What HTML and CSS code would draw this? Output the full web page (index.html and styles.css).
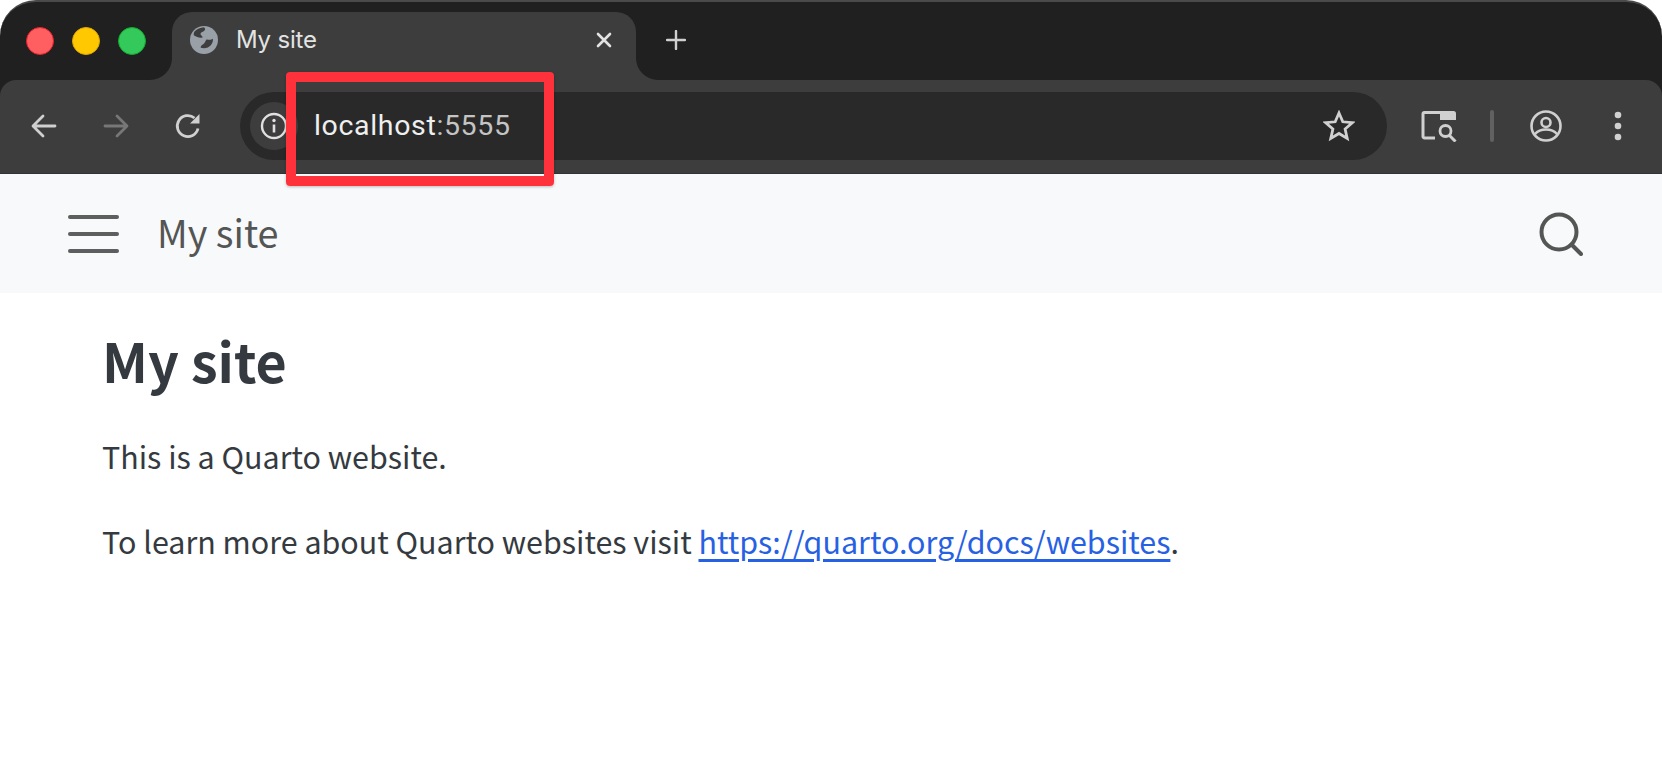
FILE: index.html
```html
<!DOCTYPE html>
<html lang="en">
<head>
<meta charset="utf-8">
<title>My site</title>
<link rel="stylesheet" href="styles.css">
</head>
<body>
<div class="browser">
  <div class="chrome">
  <div class="tabstrip">
    <div class="lights">
      <span class="light red"></span>
      <span class="light yellow"></span>
      <span class="light green"></span>
    </div>
    <div class="tab">
      <svg class="globe" viewBox="0 0 28 28"><circle cx="14" cy="14" r="14" fill="#9aa0a8"/><path d="M4.500 5.500C7 3 10.500 1.500 14 1.300c1.500 1.200 1.500 2.700 0 3.700-1.500 1-3.500 1.500-3.500 3 0 1.500 2.500 2 2 3.500C10 12.500 6.500 11 4 9.500c-.5-1.300-.2-2.800.5-4z" fill="#3d3d3d"/><path d="M16.500 13.500c1.500-.5 2.500 1.500 6.300-.8.8 3-1.800 7.300-5 8.800-2.300 1-5.300 .8-7.100.2-.2-1.700 1.300-2.700 2.800-3.700 1.500-1 2-3.500 3-4.500z" fill="#3d3d3d"/></svg>
      <span class="tab-title">My site</span>
      <svg class="tab-close" viewBox="0 0 16 16"><path d="M2 2l12 12M14 2L2 14" stroke="#e3e3e3" stroke-width="2.600" stroke-linecap="round"/></svg>
    </div>
    <svg class="newtab" viewBox="0 0 20 20"><path d="M10 1v18M1 10h18" stroke="#d0d0d0" stroke-width="2.400" stroke-linecap="round"/></svg>
  </div>
  <div class="toolbar">
    <svg class="nav-icon" viewBox="0 0 28 28"><path d="M25 14H3.500M13 4L3 14l10 10" fill="none" stroke="#d0d0d0" stroke-width="2.800" stroke-linecap="round" stroke-linejoin="round"/></svg>
    <svg class="nav-icon" viewBox="0 0 28 28"><path d="M3 14h21.500M15 4l10 10-10 10" fill="none" stroke="#777" stroke-width="2.800" stroke-linecap="round" stroke-linejoin="round"/></svg>
    <svg class="nav-icon" viewBox="0 0 28 28"><path d="M24 16.500A10.500 10.500 0 1 1 20.500 6" fill="none" stroke="#d0d0d0" stroke-width="2.800"/><path d="M25.500 2v9.500H16z" fill="#d0d0d0"/></svg>
    <div class="omnibox">
      <div class="info-chip">
        <svg class="info" viewBox="0 0 28 28"><circle cx="14" cy="14" r="12" fill="none" stroke="#e0e0e0" stroke-width="2.400"/><path d="M14 12.500v8" stroke="#e0e0e0" stroke-width="2.600"/><circle cx="14" cy="8.500" r="1.700" fill="#e0e0e0"/></svg>
      </div>
      <span class="url">localhost<span class="url-port">:5555</span></span>
      <svg class="star" viewBox="0 0 32 32"><path d="M16 3l3.800 8.800 9.500.9-7.200 6.300 2.100 9.400L16 23.500l-8.200 4.900L9.900 19l-7.200-6.300 9.500-.9z" fill="none" stroke="#d0d0d0" stroke-width="2.800" stroke-linejoin="miter"/></svg>
    </div>
    <div class="tools">
      <svg class="lens" viewBox="0 0 36 32"><path d="M14 28H3.500A1.500 1.500 0 0 1 2 26.500V4a1.500 1.500 0 0 1 1.500-1.500H19" fill="none" stroke="#d0d0d0" stroke-width="3"/><path d="M19 1h13.500A2.500 2.500 0 0 1 35 3.500V10H19z" fill="#d0d0d0"/><circle cx="24.500" cy="21" r="5.500" fill="none" stroke="#d0d0d0" stroke-width="2.800"/><path d="M28.500 25.500l6 6" stroke="#d0d0d0" stroke-width="3"/></svg>
      <span class="divider"></span>
      <svg class="profile" viewBox="0 0 32 32"><circle cx="16" cy="16" r="14.500" fill="none" stroke="#d0d0d0" stroke-width="2.600"/><circle cx="16" cy="12.500" r="4.500" fill="none" stroke="#d0d0d0" stroke-width="2.600"/><path d="M5 24c3-3.500 7-4.500 11-4.500s8 1 11 4.500" fill="none" stroke="#d0d0d0" stroke-width="2.600"/></svg>
      <svg class="dots" viewBox="0 0 8 30"><circle cx="4" cy="4" r="3.300" fill="#d0d0d0"/><circle cx="4" cy="15" r="3.300" fill="#d0d0d0"/><circle cx="4" cy="26" r="3.300" fill="#d0d0d0"/></svg>
    </div>
  </div>
  </div>
  <nav class="navbar">
    <span class="burger"><i></i><i></i><i></i></span>
    <span class="brand">My site</span>
    <svg class="search" viewBox="0 0 44 44"><circle cx="20" cy="20" r="17.500" fill="none" stroke="#545555" stroke-width="4"/><path d="M32.500 32.500L42 42" stroke="#545555" stroke-width="4" stroke-linecap="round"/></svg>
  </nav>
  <main class="content">
    <h1 class="title">My site</h1>
    <p>This is a Quarto website.</p>
    <p>To learn more about Quarto websites visit <a href="https://quarto.org/docs/websites">https://quarto.org/docs/websites</a>.</p>
  </main>
</div>
<div class="callout"></div>
</body>
</html>
```
FILE: styles.css
```css
* { box-sizing: border-box; }
html, body { margin: 0; height: 100%; background: #fff; overflow: hidden; }
.browser { width: 1662px; height: 762px; display: flex; flex-direction: column; }
.chrome { background: #202020; border-radius: 36px 36px 0 0; border-top: 2px solid #4a4a4a; flex: none; }
.tabstrip { height: 78px; display: flex; align-items: flex-start; }
.lights { display: flex; gap: 18px; padding: 25px 0 0 26px; width: 172px; }
.light { width: 28px; height: 28px; border-radius: 50%; border: 1px solid; }
.red { background: #ff5f60; border-color: #e8202c; }
.yellow { background: #ffc800; border-color: #e0a800; }
.green { background: #33c95b; border-color: #12ab2d; }
.tab {
  position: relative; width: 464px; height: 68px; margin-top: 10px; background: #3d3d3d;
  border-radius: 20px 20px 0 0; display: flex; align-items: center; padding: 0 24px 12px 18px;
}
.tab::before, .tab::after {
  content: ""; position: absolute; bottom: 0; width: 22px; height: 22px; background: #3d3d3d;
}
.tab::before { left: -22px; clip-path: path("M22 0 A22 22 0 0 1 0 22 H22 Z"); }
.tab::after { right: -22px; clip-path: path("M0 0 A22 22 0 0 0 22 22 H0 Z"); }
.globe { width: 28px; height: 28px; flex: none; }
.tab-title { margin-left: 18px; font: 24px/28px "Inter", "Liberation Sans", sans-serif; color: #e3e3e3; flex: 1; letter-spacing: -.2px; }
.tab-close { width: 16px; height: 16px; }
.newtab { width: 20px; height: 20px; margin: 28px 0 0 30px; }
.toolbar {
  height: 94px; background: #3d3d3d; border-radius: 16px 16px 0 0;
  display: flex; align-items: center; padding: 0 0 1px 30px; border-bottom: 1px solid #333;
}
.nav-icon { width: 28px; height: 28px; margin-right: 44px; flex: none; }
.nav-icon:nth-of-type(3) { margin-right: 38px; }
.omnibox {
  width: 1147px; height: 68px; background: #292929; border-radius: 34px; flex: none;
  display: flex; align-items: center; padding: 0 32px 0 10px;
}
.info-chip { width: 48px; height: 48px; border-radius: 50%; background: #3d3d3d; display: flex; align-items: center; justify-content: center; flex: none; }
.info { width: 28px; height: 28px; }
.url { margin-left: 16px; font: 28.500px/32px "Roboto", "Liberation Sans", sans-serif; color: #efefef; flex: 1; letter-spacing: .65px; }
.url-port { color: #c4c4c4; }
.star { width: 32px; height: 32px; }
.tools { display: flex; align-items: center; flex: 1; padding-left: 34px; }
.lens { width: 36px; height: 32px; flex: none; }
.divider { width: 4px; height: 32px; margin-left: 33px; background: #616161; border-radius: 2px; flex: none; }
.profile { width: 32px; height: 32px; margin-left: 36px; flex: none; }
.dots { width: 8px; height: 30px; margin-left: 52px; flex: none; }
.navbar {
  height: 119px; background: #f8f9fa; flex: none; display: flex; align-items: center;
  padding: 0 79px 0 68px;
}
.burger { display: flex; flex-direction: column; gap: 13px; width: 51px; flex: none; }
.burger i { display: block; height: 4px; background: #5d5e5e; border-radius: 2px; }
.brand { margin: 0 0 4px 38px; font: 37.800px/48px "Noto Sans CJK SC", sans-serif; color: #545555; flex: 1; }
.search { width: 44px; height: 44px; flex: none; }
.content { padding: 0 0 0 102px; font: 30.450px/48px "Noto Sans CJK SC", sans-serif; color: #343a40; }
.title { margin: 35px 0 40px; font: 700 53.800px/64px "Noto Sans CJK SC", sans-serif; color: #343a40; }
.content p { margin: 0 0 37px; }
.content a { color: #2761e3; text-decoration: underline; text-decoration-thickness: 3px; text-underline-offset: 5px; }
.callout {
  position: absolute; left: 286px; top: 72px; width: 268px; height: 114px;
  border: 10px solid #ff323c; border-radius: 4px; box-shadow: 0 1px 3px rgba(0,0,0,.25);
}
```
